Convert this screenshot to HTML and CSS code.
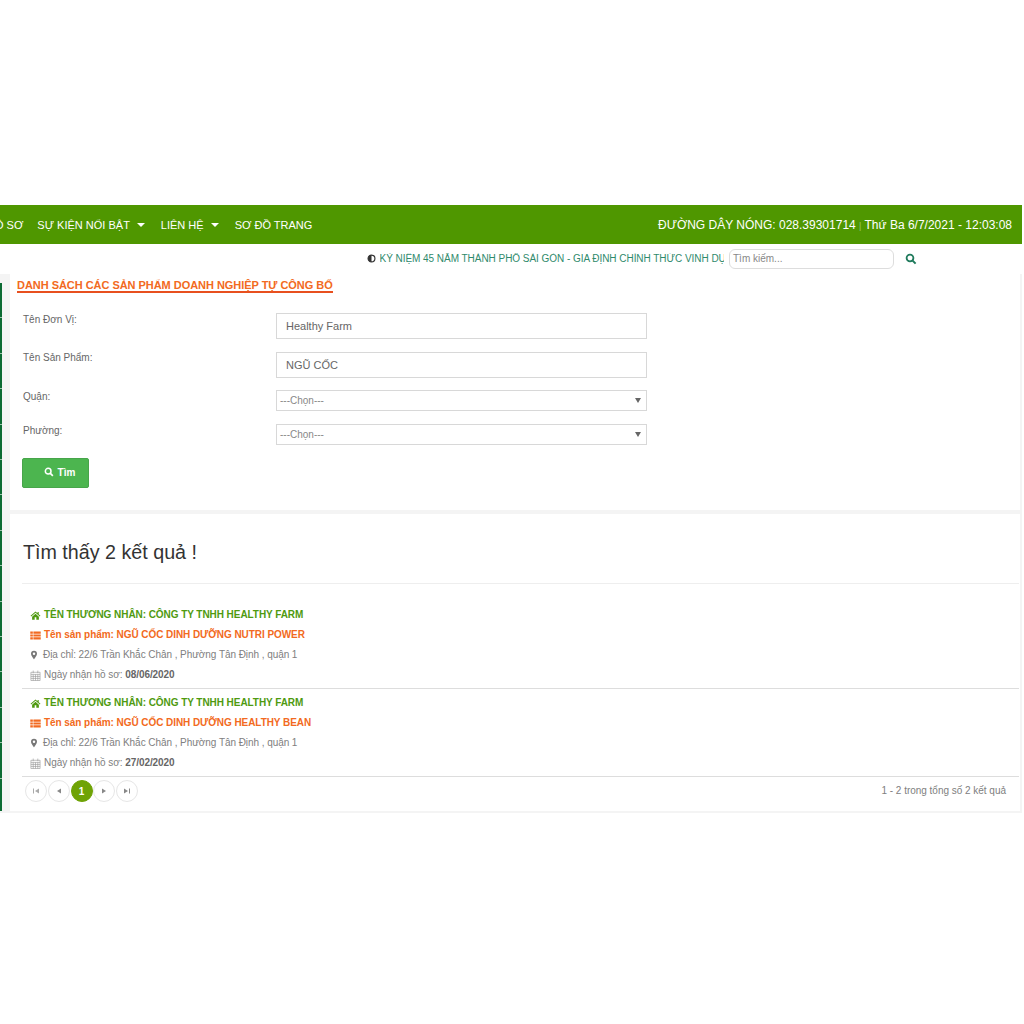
FILE: index.html
```html
<!DOCTYPE html>
<html lang="vi">
<head>
<meta charset="utf-8">
<title>Danh sách các sản phẩm doanh nghiệp tự công bố</title>
<link rel="stylesheet" href="styles.css">
</head>
<body>
<div class="page">
  <header class="nav">
    <ul class="menu">
      <li class="first">HỒ SƠ</li>
      <li>SỰ KIỆN NỔI BẬT <i class="caret"></i></li>
      <li>LIÊN HỆ <i class="caret"></i></li>
      <li>SƠ ĐỒ TRANG</li>
    </ul>
    <div class="hotline">ĐƯỜNG DÂY NÓNG: 028.39301714 <span class="sep">|</span> Thứ Ba 6/7/2021 - 12:03:08</div>
  </header>
  <div class="ticker">
    <svg class="tick-icon" viewBox="0 0 10 10"><circle cx="5" cy="5" r="3.8" fill="#fff" stroke="#333" stroke-width="1.3"/><path d="M5 1.2a3.8 3.8 0 0 0 0 7.6z" fill="#333"/></svg>
    <div class="marquee">KỶ NIỆM 45 NĂM THÀNH PHỐ SÀI GÒN - GIA ĐỊNH CHÍNH THỨC VINH DỰ</div>
    <div class="search-box">Tìm kiếm...</div>
    <svg class="search-icon" viewBox="0 0 12 12"><circle cx="5" cy="5" r="3.4" fill="none" stroke="#1f7a5c" stroke-width="1.8"/><path d="M7.6 7.6 10.6 10.6" stroke="#1f7a5c" stroke-width="2"/></svg>
  </div>
  <div class="main">
    <div class="rail"></div>
    <div class="content">
      <section class="panel form-panel">
        <h2 class="title">DANH SÁCH CÁC SẢN PHẨM DOANH NGHIỆP TỰ CÔNG BỐ</h2>
        <div class="row row-input"><label>Tên Đơn Vị:</label><div class="input">Healthy Farm</div></div>
        <div class="row row-input"><label>Tên Sản Phẩm:</label><div class="input">NGŨ CỐC</div></div>
        <div class="row row-select"><label>Quận:</label><div class="select">---Chọn---<i class="arrow"></i></div></div>
        <div class="row row-select"><label>Phường:</label><div class="select">---Chọn---<i class="arrow"></i></div></div>
        <button class="btn" type="button">
          <svg class="btn-icon" viewBox="0 0 12 12"><circle cx="5" cy="5" r="3.4" fill="none" stroke="#fff" stroke-width="1.8"/><path d="M7.6 7.6 10.6 10.6" stroke="#fff" stroke-width="2"/></svg>
          Tìm
        </button>
      </section>
      <section class="panel result-panel">
        <h1 class="count">Tìm thấy 2 kết quả !</h1>
        <div class="list">
          <article class="item">
            <p class="merchant"><svg class="ico" viewBox="0 0 12 12"><path d="M6 1.6.6 6.4l.7.7L6 3l4.7 4.1.7-.7-1.9-1.7V2.2H8.2v1.4zM2.3 7.3v3.2h2.8V8h1.8v2.5h2.8V7.3L6 4.1z" fill="#4f9a10"/></svg>TÊN THƯƠNG NHÂN: CÔNG TY TNHH HEALTHY FARM</p>
            <p class="product"><svg class="ico" viewBox="0 0 12 12"><path d="M.3 1.700h2.800v2.400H.3zM3.700 1.700h8v2.400h-8zM.3 4.800h2.800v2.400H.3zM3.700 4.800h8v2.400h-8zM.3 7.900h2.800v2.400H.3zM3.700 7.900h8v2.400h-8z" fill="#f26a21"/></svg>Tên sản phẩm: NGŨ CỐC DINH DƯỠNG NUTRI POWER</p>
            <p class="meta"><svg class="ico pin" viewBox="0 0 12 12"><path fill-rule="evenodd" d="M6 .8a3.6 3.6 0 0 0-3.6 3.6C2.400 6.600 6 11.200 6 11.200s3.600-4.600 3.600-6.800A3.600 3.600 0 0 0 6 .8zm0 2.100a1.500 1.500 0 1 1 0 3 1.500 1.500 0 0 1 0-3z" fill="#777"/></svg>Địa chỉ: 22/6 Trần Khắc Chân , Phường Tân Định , quận 1</p>
            <p class="meta"><svg class="ico" viewBox="0 0 12 12"><path d="M1 2.500h10v9H1zM1 4.800h10M3.500.6v2.900M8.500.6v2.900M1 7h10M1 9.200h10M3.500 4.800v6.700M6 4.800v6.700M8.500 4.800v6.700" fill="none" stroke="#999" stroke-width=".7"/></svg>Ngày nhận hồ sơ: <b>08/06/2020</b></p>
          </article>
          <article class="item">
            <p class="merchant"><svg class="ico" viewBox="0 0 12 12"><path d="M6 1.6.6 6.4l.7.7L6 3l4.7 4.1.7-.7-1.9-1.7V2.2H8.2v1.4zM2.3 7.3v3.2h2.8V8h1.8v2.5h2.8V7.3L6 4.1z" fill="#4f9a10"/></svg>TÊN THƯƠNG NHÂN: CÔNG TY TNHH HEALTHY FARM</p>
            <p class="product"><svg class="ico" viewBox="0 0 12 12"><path d="M.3 1.700h2.800v2.400H.3zM3.700 1.700h8v2.400h-8zM.3 4.800h2.800v2.400H.3zM3.700 4.800h8v2.400h-8zM.3 7.900h2.800v2.400H.3zM3.700 7.900h8v2.400h-8z" fill="#f26a21"/></svg>Tên sản phẩm: NGŨ CỐC DINH DƯỠNG HEALTHY BEAN</p>
            <p class="meta"><svg class="ico pin" viewBox="0 0 12 12"><path fill-rule="evenodd" d="M6 .8a3.6 3.6 0 0 0-3.6 3.6C2.400 6.600 6 11.200 6 11.200s3.600-4.600 3.600-6.800A3.600 3.600 0 0 0 6 .8zm0 2.100a1.500 1.500 0 1 1 0 3 1.500 1.500 0 0 1 0-3z" fill="#777"/></svg>Địa chỉ: 22/6 Trần Khắc Chân , Phường Tân Định , quận 1</p>
            <p class="meta"><svg class="ico" viewBox="0 0 12 12"><path d="M1 2.500h10v9H1zM1 4.800h10M3.500.6v2.900M8.500.6v2.900M1 7h10M1 9.200h10M3.500 4.800v6.700M6 4.800v6.700M8.500 4.800v6.700" fill="none" stroke="#999" stroke-width=".7"/></svg>Ngày nhận hồ sơ: <b>27/02/2020</b></p>
          </article>
        </div>
        <footer class="pager">
          <div class="pages">
            <span class="pg"><svg viewBox="0 0 8 8"><path d="M1 1.500h1v5H1zM7 1.500v5L3 4z" fill="#aaa"/></svg></span>
            <span class="pg"><svg viewBox="0 0 8 8"><path d="M6 1.500v5L2 4z" fill="#888"/></svg></span>
            <span class="pg current">1</span>
            <span class="pg"><svg viewBox="0 0 8 8"><path d="M2 1.500v5L6 4z" fill="#888"/></svg></span>
            <span class="pg"><svg viewBox="0 0 8 8"><path d="M7 1.500H6v5h1zM1 1.500v5L5 4z" fill="#888"/></svg></span>
          </div>
          <div class="summary">1 - 2 trong tổng số 2 kết quả</div>
        </footer>
      </section>
    </div>
  </div>
</div>
</body>
</html>
```
FILE: styles.css
```css
* { box-sizing: border-box; }
html, body { margin: 0; padding: 0; background: #fff; }
body { font-family: "Liberation Sans", Arial, sans-serif; color: #555; overflow: hidden; height: 1024px; }
.page { width: 1022px; padding-top: 205px; }

.nav { height: 39px; background: #4f9700; color: #fff; display: flex; align-items: center; justify-content: space-between; overflow: hidden; font-size: 11px; }
.menu { display: flex; list-style: none; margin: 0 0 0 -13px; padding: 0; gap: 14px; white-space: nowrap; }
.menu li { display: flex; align-items: center; gap: 7px; }
.caret { width: 0; height: 0; border-left: 4.500px solid transparent; border-right: 4.500px solid transparent; border-top: 4.500px solid #fff; margin: 1px 2px 0 0; }
.hotline { font-size: 12px; padding-right: 10px; white-space: nowrap; }
.sep { color: #9ac46b; font-size: 9px; }

.ticker { height: 29px; display: flex; align-items: center; padding-left: 367px; }
.tick-icon { width: 9px; height: 9px; flex: none; margin-right: 3.500px; }
.marquee { width: 344px; overflow: hidden; white-space: nowrap; font-size: 10px; letter-spacing: -0.04px; color: #2f8a6c; }
.search-box { width: 165px; height: 20px; margin-left: 5.500px; border: 1px solid #ddd; border-radius: 6px; font-size: 10px; color: #888; padding: 3px 3px; }
.search-icon { width: 12px; height: 12px; margin-left: 11px; flex: none; }

.main { display: flex; height: 539px; margin-top: 1px; background: #f4f4f4; }
.rail { width: 2px; margin-top: 9px; margin-bottom: 2px; background: repeating-linear-gradient(to bottom, #0c6b33 0, #0c6b33 34.400px, #9cc4ac 34.400px, #9cc4ac 35.400px); flex: none; }
.content { flex: 1; margin: 0 2px 2px 8px; display: flex; flex-direction: column; gap: 4px; min-width: 0; }
.panel { background: #fff; }

.form-panel { height: 236px; padding: 6px 12px 0 7px; display: flex; flex-direction: column; align-items: flex-start; }
.title { margin: 0 0 19px; font-size: 11px; line-height: 11px; letter-spacing: -0.04px; font-weight: bold; color: #f26a21; border-bottom: 2px solid #e8501f; white-space: nowrap; }
.row { display: flex; margin-left: 5px; font-size: 10px; color: #666; }
.row label { width: 254px; padding-left: 1px; flex: none; line-height: 12px; }
.row-input { height: 39px; }
.row-input label { padding-top: 2px; }
.row-input + .row-input { height: 38px; }
.row-input + .row-input label { padding-top: 1px; }
.row-select { height: 34px; }
.row-select label { padding-top: 2px; }
.input { width: 371px; height: 26px; margin-top: 1px; border: 1px solid #d8d8d8; font-size: 11px; color: #666; padding: 6px 9px; line-height: 13px; }
.select { position: relative; width: 371px; height: 21px; margin-top: 1px; border: 1px solid #d8d8d8; font-size: 10px; color: #888; padding: 4px 3px; line-height: 12px; }
.arrow { position: absolute; right: 5px; top: 7px; width: 0; height: 0; border-left: 3.500px solid transparent; border-right: 3.500px solid transparent; border-top: 5px solid #666; }
.btn { display: flex; align-items: center; justify-content: center; gap: 4px; width: 67px; height: 30px; margin: 1px 0 0 5px; background: #4cb54f; border: 1px solid #47a54a; border-radius: 2px; color: #fff; font: bold 10px "Liberation Sans", Arial, sans-serif; padding: 0 0 2px 8px; }
.btn-icon { width: 10px; height: 10px; }

.result-panel { flex: 1; display: flex; flex-direction: column; padding: 0 1px 0 12px; }
.count { margin: 0; height: 70px; border-bottom: 1px solid #eee; font-weight: normal; font-size: 19.700px; line-height: 24px; color: #333; padding: 26px 0 0 1px; }
.list { margin-top: 16px; }
.item { height: 88px; border-bottom: 1px solid #ddd; padding: 4px 0 0 8px; }
.item:first-child { height: 89px; padding-top: 5px; }
.item p { margin: 0; height: 20px; font-size: 10px; letter-spacing: -0.06px; line-height: 20px; display: flex; align-items: center; white-space: pre; }
.item .merchant { font-weight: bold; color: #4f9a10; }
.item .product { font-weight: bold; color: #f26a21; }
.item .meta { color: #808080; }
.item .meta b { color: #666; }
.ico { width: 11px; height: 11px; margin-right: 3px; flex: none; }
.ico.pin { width: 10px; height: 10px; margin-right: 4px; margin-left: -1px; }
.pager { display: flex; justify-content: space-between; align-items: center; height: 28px; padding: 0 13px 0 3px; }
.pages { display: flex; gap: 0.800px; }
.pg { width: 22px; height: 22px; border: 1px solid #e6e6e6; border-radius: 50%; display: flex; align-items: center; justify-content: center; }
.pg svg { width: 8px; height: 8px; }
.pg.current { background: #6fa306; border-color: #6fa306; color: #fff; font-size: 10px; font-weight: bold; }
.summary { font-size: 10px; letter-spacing: -0.02px; color: #808080; padding-bottom: 2px; }
```
